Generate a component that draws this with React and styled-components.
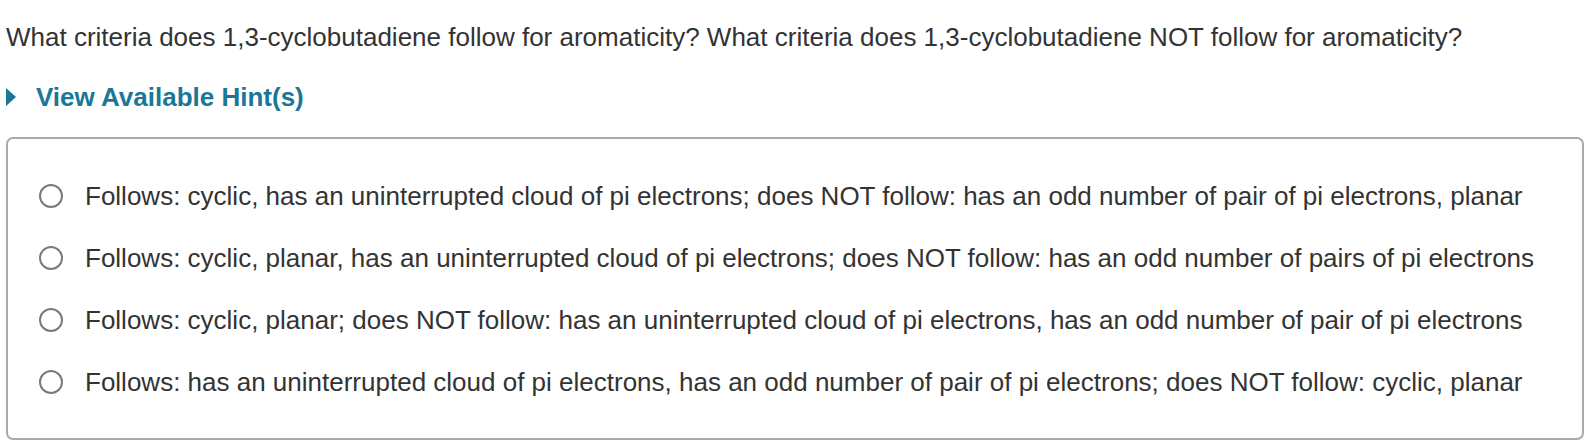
import React from 'react';
import styled, { createGlobalStyle } from 'styled-components';

const GlobalStyle = createGlobalStyle`
    body {
        margin: 0;
        background: #fff;
        font-family: "Liberation Sans", Arial, Helvetica, sans-serif;
        color: #333;
    }
`

const Wrapper = styled.div`
    padding: 22px 10px 0 6px;
`

const Question = styled.p`
    margin: 0;
    font-size: 26px;
    line-height: 30px;
    color: #333;
`

const HintToggle = styled.div`
    display: flex;
    align-items: center;
    gap: 20px;
    margin-top: 30px;
    color: #1a7896;
    font-weight: 700;
    font-size: 26px;
    line-height: 30px;
    cursor: pointer;
`

const Arrow = styled.span`
    width: 0;
    height: 0;
    border-top: 9px solid transparent;
    border-bottom: 9px solid transparent;
    border-left: 10px solid #1a7896;
`

const OptionsBox = styled.div`
    margin-top: 25px;
    border: 2px solid #aaa;
    border-radius: 7px;
    padding: 26px 0 25px 31px;
`

const Option = styled.label`
    display: flex;
    align-items: center;
    gap: 22px;
    height: 62px;
    font-size: 26px;
    color: #333;
    cursor: pointer;
`

const Radio = styled.span`
    width: 24px;
    height: 24px;
    box-sizing: border-box;
    border: 2px solid #7a7a7a;
    border-radius: 50%;
    background: #fff;
    flex-shrink: 0;
`

const options = [
    'Follows: cyclic, has an uninterrupted cloud of pi electrons; does NOT follow: has an odd number of pair of pi electrons, planar',
    'Follows: cyclic, planar, has an uninterrupted cloud of pi electrons; does NOT follow: has an odd number of pairs of pi electrons',
    'Follows: cyclic, planar; does NOT follow: has an uninterrupted cloud of pi electrons, has an odd number of pair of pi electrons',
    'Follows: has an uninterrupted cloud of pi electrons, has an odd number of pair of pi electrons; does NOT follow: cyclic, planar',
];

const App = () => {
    return (
        <>
            <GlobalStyle />
            <Wrapper>
                <Question>
                    What criteria does 1,3-cyclobutadiene follow for aromaticity? What criteria does 1,3-cyclobutadiene NOT follow for aromaticity?
                </Question>
                <HintToggle>
                    <Arrow />
                    <span>View Available Hint(s)</span>
                </HintToggle>
                <OptionsBox>
                    {options.map((text) => (
                        <Option key={text}>
                            <Radio />
                            <span>{text}</span>
                        </Option>
                    ))}
                </OptionsBox>
            </Wrapper>
        </>
    );
};

export default App;
